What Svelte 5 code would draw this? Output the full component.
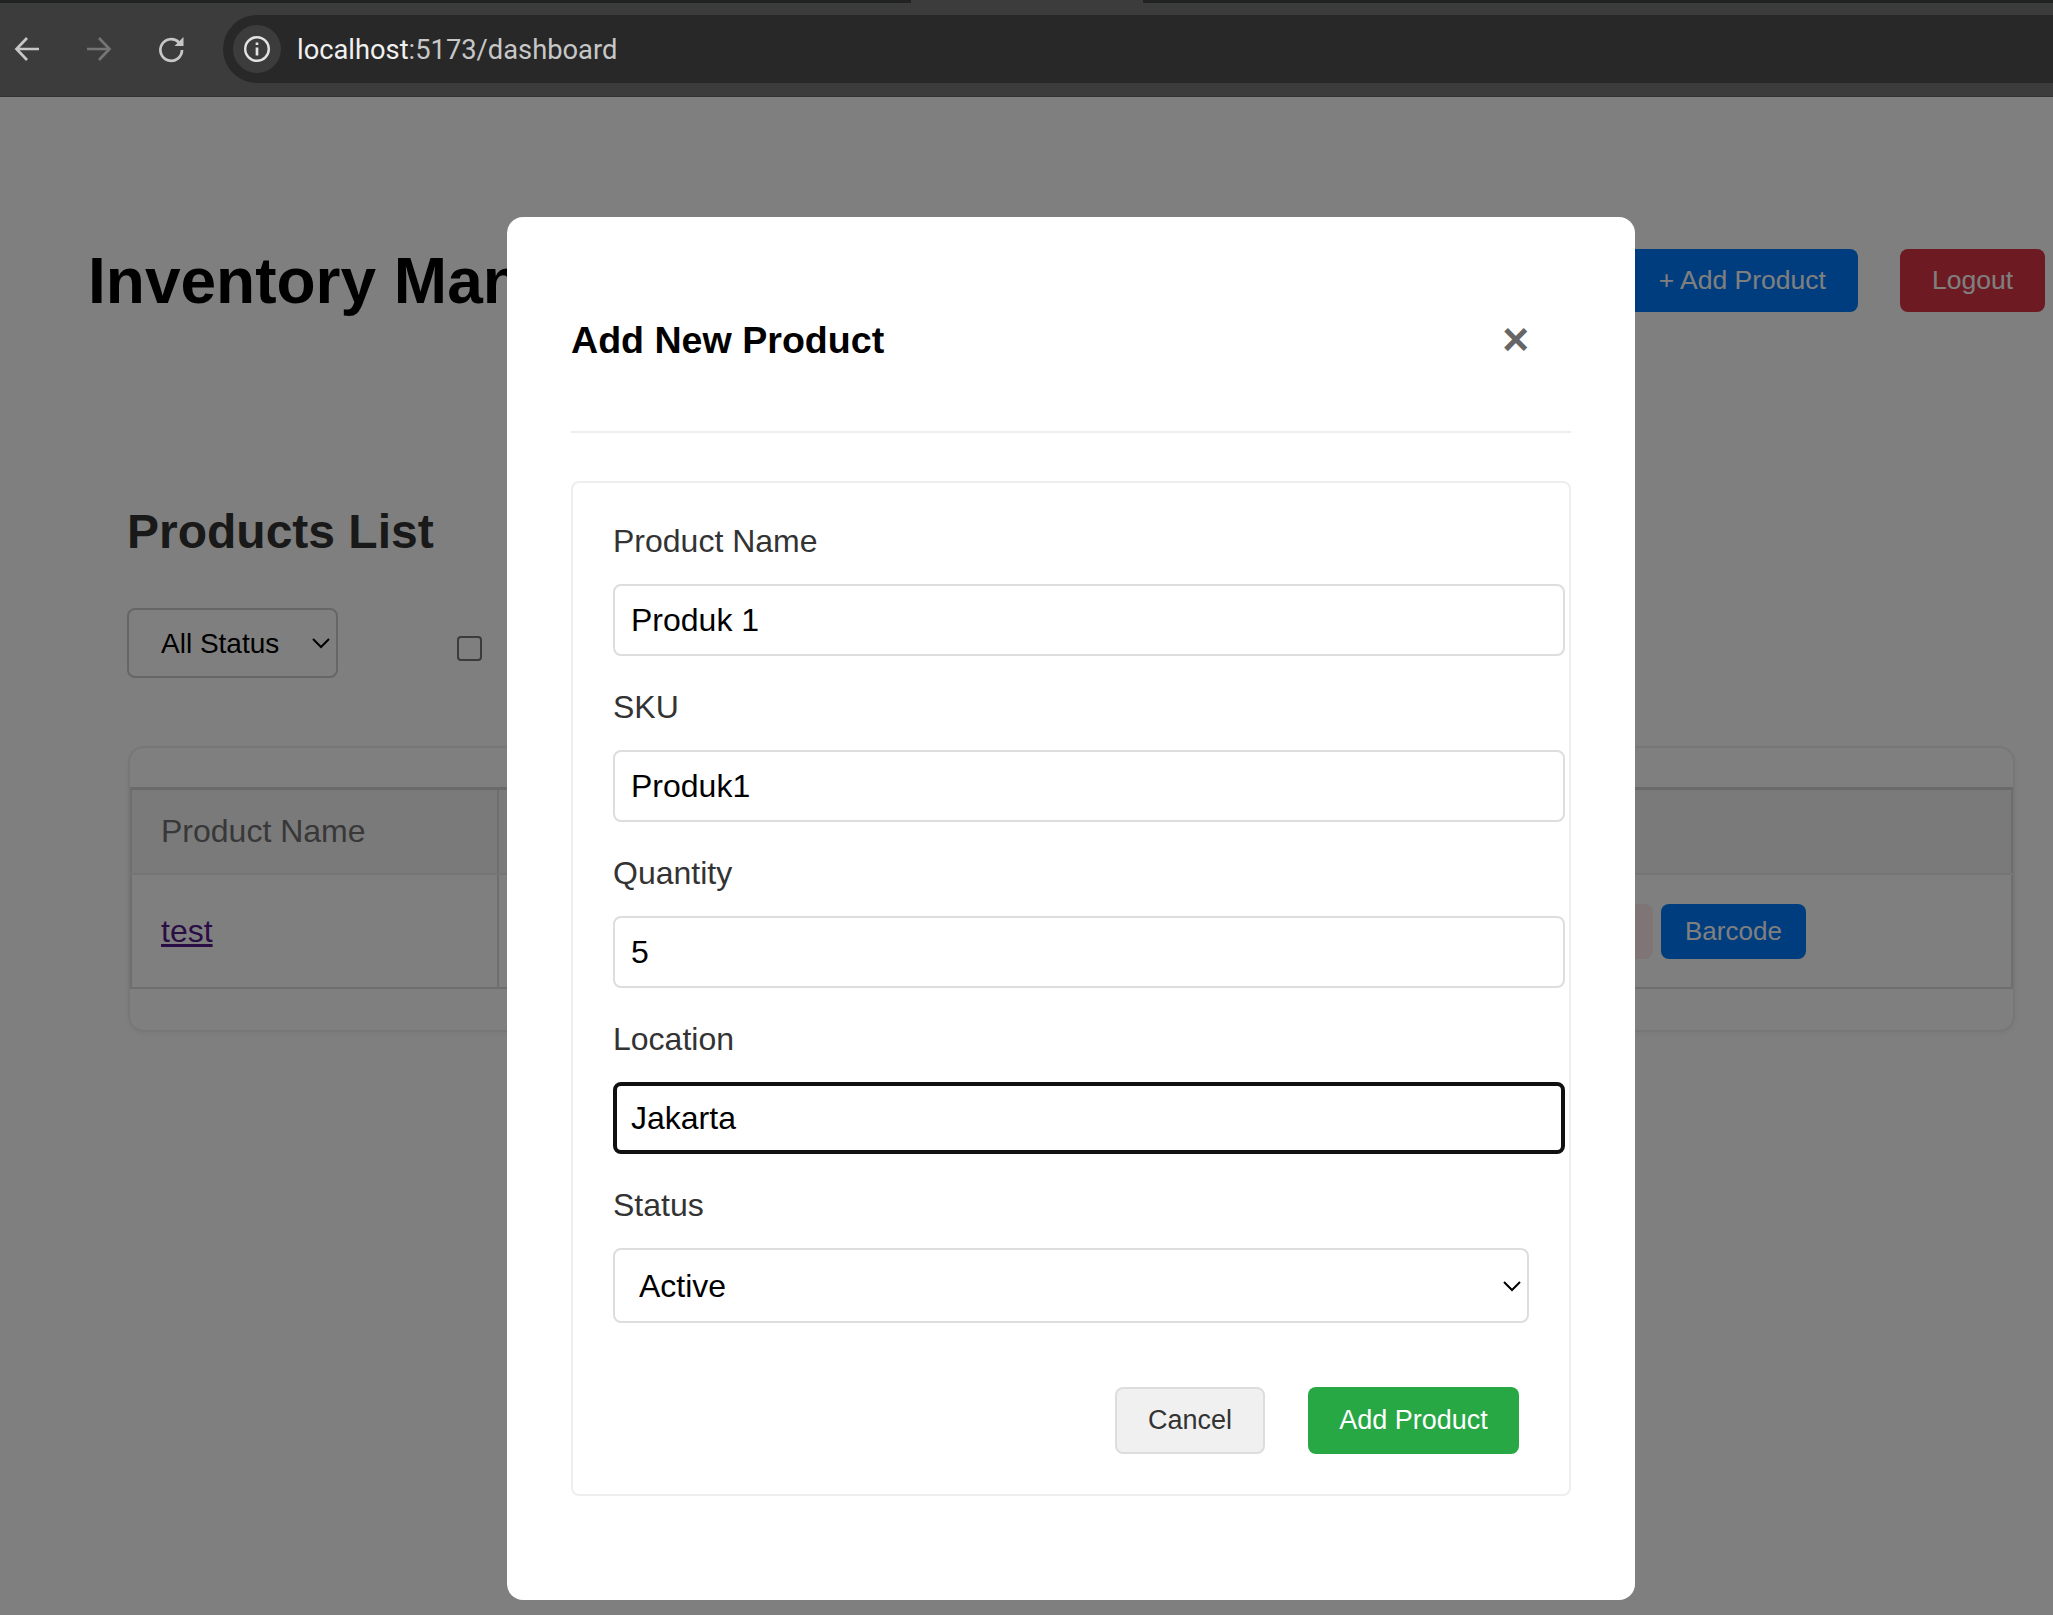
<script>
    // form values shown in the modal
    let form = { name: 'Produk 1', sku: 'Produk1', quantity: '5', location: 'Jakarta', status: 'active' };
</script>

<div class="browser">
    <div class="tabstrip">
        <div class="strip"></div>
        <div class="active-tab"></div>
        <div class="strip"></div>
    </div>
    <div class="toolbar">
        <svg class="nav" viewBox="0 0 32 32" fill="none" stroke="#c7c7c7" stroke-width="2.700"><path d="M28 16H6M16 5 5.500 16 16 27" /></svg>
        <svg class="nav" viewBox="0 0 32 32" fill="none" stroke="#757575" stroke-width="2.700"><path d="M4 16h22M16 5l10.500 11L16 27" /></svg>
        <svg class="nav" viewBox="0 0 32 32" fill="none" stroke="#c7c7c7" stroke-width="2.700">
            <path d="M27 17a10.800 10.800 0 1 1-3-7.500" />
            <path d="M28.500 4v9h-9z" fill="#c7c7c7" stroke="none" />
        </svg>
        <div class="omnibox">
            <span class="site-info">
                <svg viewBox="0 0 28 28" fill="none" stroke="#e3e3e3" stroke-width="2.400">
                    <circle cx="14" cy="14" r="11.800" />
                    <path d="M14 12.500v8M14 7.500v2.600" stroke-width="2.700" />
                </svg>
            </span>
            <span class="url"><span class="host">localhost</span>:5173/dashboard</span>
        </div>
    </div>
</div>

<main class="page">
    <header class="top">
        <h1>Inventory Management</h1>
        <div class="top-actions">
            <button class="btn blue">+ Add Product</button>
            <button class="btn red">Logout</button>
        </div>
    </header>

    <section class="products">
        <h2>Products List</h2>
        <div class="filters">
            <div class="select-wrap filter-wrap">
                <select class="status-filter">
                    <option>All Status</option>
                </select>
                <svg class="chevron" viewBox="0 0 18 11" fill="none" stroke="#000" stroke-width="2"><path d="M1 1l8 8 8-8" /></svg>
            </div>
            <input class="check" type="checkbox" />
        </div>

        <div class="table-card">
            <table>
                <thead>
                    <tr>
                        <th class="col-name">Product Name</th>
                        <th>SKU</th>
                        <th>Quantity</th>
                        <th>Location</th>
                        <th>Status</th>
                        <th class="col-actions">Actions</th>
                    </tr>
                </thead>
                <tbody>
                    <tr>
                        <td><a href="#test">test</a></td>
                        <td></td>
                        <td></td>
                        <td></td>
                        <td></td>
                        <td>
                            <div class="row-actions">
                                <button class="delete">Delete</button>
                                <button class="barcode">Barcode</button>
                            </div>
                        </td>
                    </tr>
                </tbody>
            </table>
        </div>
    </section>

    <div class="overlay">
        <div class="modal">
            <div class="modal-head">
                <h3>Add New Product</h3>
                <button class="close">×</button>
            </div>
            <form class="modal-form">
                <div class="field">
                    <label for="name">Product Name</label>
                    <input id="name" class="text" bind:value={form.name} />
                </div>
                <div class="field">
                    <label for="sku">SKU</label>
                    <input id="sku" class="text" bind:value={form.sku} />
                </div>
                <div class="field">
                    <label for="qty">Quantity</label>
                    <input id="qty" class="text" bind:value={form.quantity} />
                </div>
                <div class="field">
                    <label for="loc">Location</label>
                    <input id="loc" class="text focused" bind:value={form.location} />
                </div>
                <div class="field">
                    <label for="status">Status</label>
                    <div class="select-wrap status-wrap">
                        <select id="status" bind:value={form.status}>
                            <option value="active">Active</option>
                            <option value="inactive">Inactive</option>
                        </select>
                        <svg class="chevron" viewBox="0 0 18 11" fill="none" stroke="#000" stroke-width="2"><path d="M1 1l8 8 8-8" /></svg>
                    </div>
                </div>
                <div class="form-actions">
                    <button type="button" class="cancel">Cancel</button>
                    <button type="button" class="submit">Add Product</button>
                </div>
            </form>
        </div>
    </div>
</main>

<style>
    :global(body) {
        margin: 0;
        background: #fff;
        font-family: "Liberation Sans", Arial, sans-serif;
    }

    .browser {
        background: #3c3c3c;
    }

    .tabstrip {
        height: 3px;
        display: flex;
    }

    .strip {
        flex: 1;
        background: #202322;
    }

    .active-tab {
        width: 232px;
    }

    .toolbar {
        height: 94px;
        display: flex;
        align-items: center;
        box-sizing: border-box;
        padding: 0 0 1px 11px;
        border-bottom: 1px solid #333;
    }

    .nav {
        width: 32px;
        height: 32px;
        margin-right: 40px;
        flex: none;
    }

    .omnibox {
        flex: 1;
        height: 68px;
        margin-left: -4px;
        border-radius: 34px 0 0 34px;
        background: #282828;
        display: flex;
        align-items: center;
        padding-left: 10px;
    }

    .site-info {
        width: 48px;
        height: 48px;
        border-radius: 50%;
        background: #3c3c3c;
        display: flex;
        align-items: center;
        justify-content: center;
    }

    .site-info svg {
        width: 28px;
        height: 28px;
    }

    .url {
        margin: 2px 0 0 16px;
        font-family: Roboto, sans-serif;
        font-size: 27.300px;
        color: #c7c7c7;
    }

    .host {
        color: #f0f0f0;
    }

    .page {
        position: relative;
        height: 1518px;
        overflow: hidden;
        color: #000;
    }

    .top {
        display: flex;
        justify-content: space-between;
        align-items: center;
        padding: 147px 8px 0 88px;
    }

    h1 {
        margin: 0;
        font-size: 64px;
        font-weight: 700;
    }

    .top-actions {
        display: flex;
        gap: 42px;
        margin-bottom: 2px;
    }

    .btn {
        height: 63px;
        padding: 0 32px;
        border: none;
        border-radius: 8px;
        color: #fff;
        font: 26.500px "Liberation Sans", Arial, sans-serif;
    }

    .blue {
        background: #007bff;
    }

    .red {
        background: #dc3545;
    }

    .products {
        padding: 0 38px 0 127px;
        margin-top: 186px;
    }

    h2 {
        margin: 0;
        font-size: 48px;
        line-height: 55px;
        color: #333;
    }

    .filters {
        display: flex;
        align-items: center;
        margin-top: 49px;
    }

    .select-wrap {
        position: relative;
    }

    .chevron {
        position: absolute;
        width: 18px;
        height: 11px;
        pointer-events: none;
    }

    .filter-wrap .chevron {
        left: 185px;
        top: 30px;
    }

    .status-wrap .chevron {
        left: 890px;
        top: 33px;
    }

    select {
        display: block;
        appearance: none;
        box-sizing: border-box;
        border: 2px solid #ddd;
        border-radius: 8px;
        background: #fff;
        color: #000;
    }

    .status-filter {
        width: 211px;
        height: 70px;
        padding: 0 0 0 32px;
        border-color: #ccc;
        font: 28px "Liberation Sans", Arial, sans-serif;
    }

    .check {
        appearance: none;
        width: 25px;
        height: 25px;
        box-sizing: border-box;
        margin: 10px 0 0 119px;
        border: 2px solid #767676;
        border-radius: 4px;
        background: #fff;
    }

    .table-card {
        margin: 68px 0 0 1px;
        padding: 39px 0 41px;
        border: 2px solid #eee;
        border-radius: 16px;
        background: #fff;
        box-shadow: 0 2px 6px rgba(0, 0, 0, 0.05);
    }

    table {
        width: 100%;
        table-layout: fixed;
        border-collapse: collapse;
        font-size: 32px;
    }

    th,
    td {
        border: 2px solid #ddd;
        padding: 0 29px;
        text-align: left;
    }

    th {
        height: 83px;
        border-top: 3px solid #d4d4d4;
        border-bottom: 2px solid #ebebeb;
        background: #f5f5f5;
        font-weight: 400;
        color: #707070;
    }

    td {
        height: 112px;
        border-top: 2px solid #ebebeb;
    }

    .col-name {
        width: 307px;
    }

    .col-actions {
        width: 482px;
    }

    a {
        color: #551a8b;
    }

    .row-actions {
        display: flex;
        align-items: center;
        gap: 8px;
    }

    .delete,
    .barcode {
        height: 55px;
        border: none;
        border-radius: 8px;
        font: 26px "Liberation Sans", Arial, sans-serif;
    }

    .delete {
        width: 153px;
        padding: 0 0 0 24px;
        text-align: left;
        background: #ffebee;
        color: #c62828;
    }

    .barcode {
        padding: 0 24px;
        background: #007bff;
        color: #fff;
    }

    .overlay {
        position: absolute;
        inset: 0;
        background: rgba(0, 0, 0, 0.5);
        padding: 120px 0 0 507px;
    }

    .modal {
        width: 1128px;
        height: 1383px;
        box-sizing: border-box;
        padding: 64px;
        border-radius: 16px;
        background: #fff;
    }

    .modal-head {
        display: flex;
        align-items: center;
        justify-content: space-between;
        padding-bottom: 34px;
        border-bottom: 2px solid #eee;
    }

    h3 {
        margin: 37px 0 35px;
        font-size: 37.600px;
        line-height: 44px;
    }

    .close {
        margin-right: 42px;
        padding: 0;
        border: none;
        background: none;
        color: #666;
        font: bold 46px "Liberation Sans", Arial, sans-serif;
    }

    .modal-form {
        margin-top: 48px;
        height: 1015px;
        box-sizing: border-box;
        padding: 40px;
        border: 2px solid #eee;
        border-radius: 8px;
    }

    .field {
        margin-bottom: 33px;
    }

    label {
        display: block;
        margin-bottom: 24px;
        font-size: 32px;
        line-height: 37px;
        color: #333;
    }

    .text {
        display: block;
        width: 952px;
        height: 72px;
        box-sizing: border-box;
        padding: 0 16px;
        border: 2px solid #ddd;
        border-radius: 8px;
        font: 32px "Liberation Sans", Arial, sans-serif;
        color: #000;
        outline: none;
    }

    .focused {
        border: 4px solid #101010;
        padding: 0 14px;
    }

    #status {
        width: 916px;
        height: 75px;
        padding: 0 0 0 24px;
        font: 32px "Liberation Sans", Arial, sans-serif;
    }

    .form-actions {
        display: flex;
        justify-content: flex-end;
        gap: 43px;
        margin: 64px 10px 0 0;
    }

    .cancel,
    .submit {
        height: 67px;
        box-sizing: border-box;
        border-radius: 8px;
        font: 27px "Liberation Sans", Arial, sans-serif;
    }

    .cancel {
        width: 150px;
        border: 2px solid #ddd;
        background: #f0f0f0;
        color: #333;
    }

    .submit {
        width: 211px;
        border: none;
        background: #28a745;
        color: #fff;
    }
</style>
